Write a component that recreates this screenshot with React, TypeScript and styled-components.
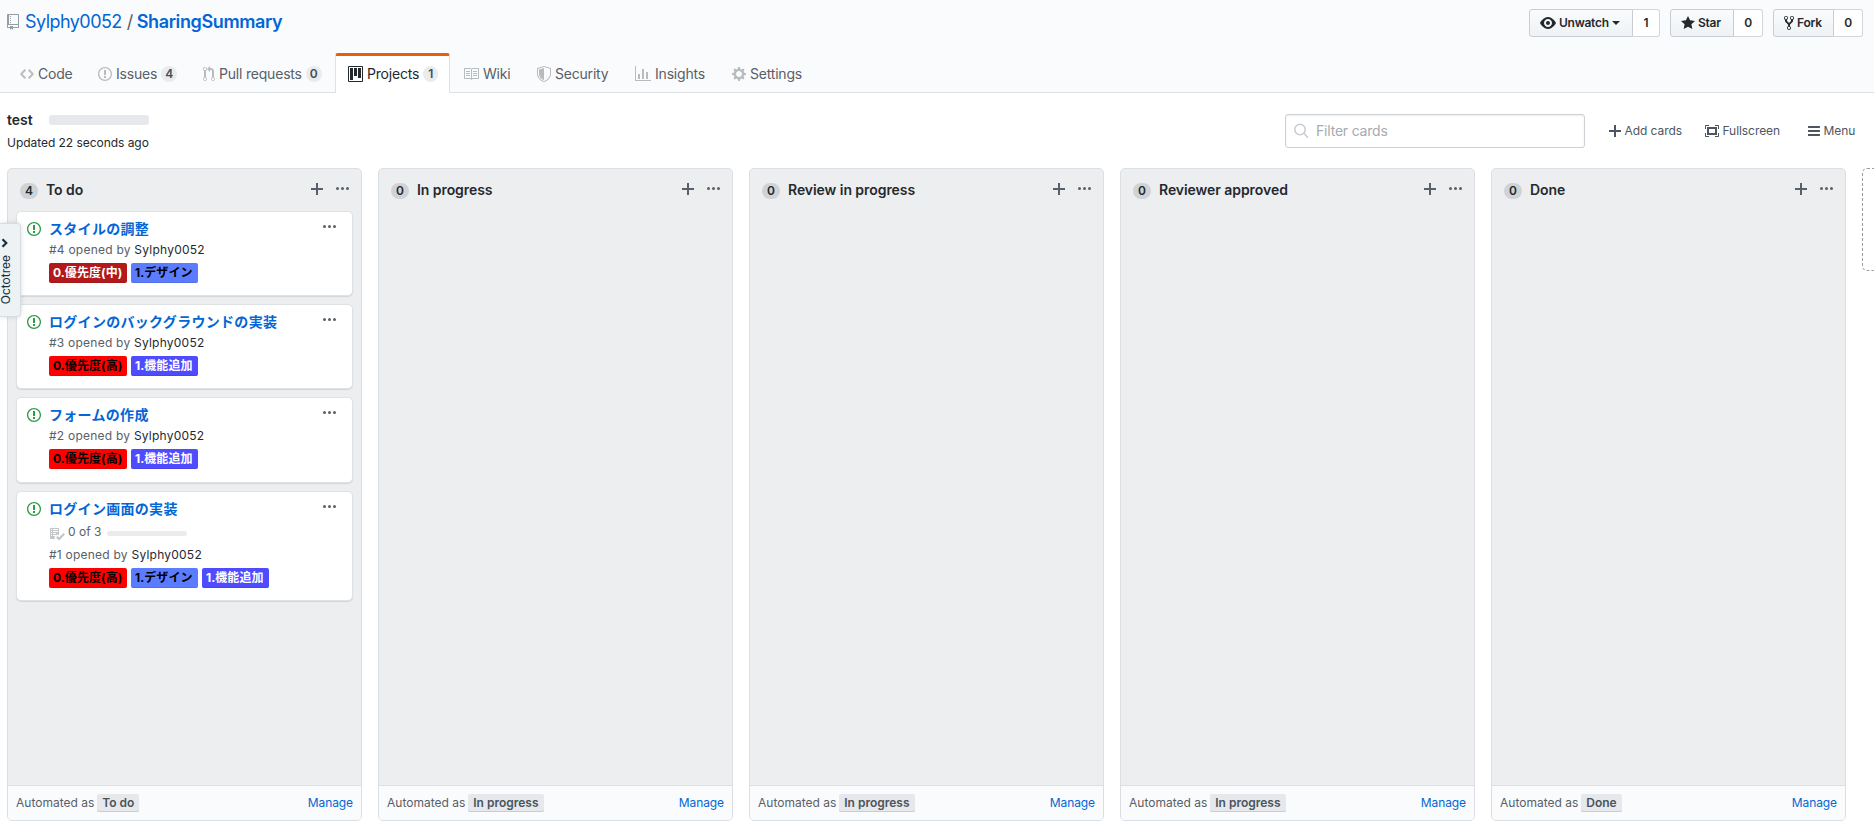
import React from "react";
import styled, { createGlobalStyle } from "styled-components";

const GlobalStyle = createGlobalStyle`
  * { box-sizing: border-box; }
  html, body { margin: 0; height: 100%; overflow: hidden; }
  body {
    background: #fff;
    color: #24292e;
    font: 14px/21px Inter, "Noto Sans CJK JP", sans-serif;
  }
  a { color: #0366d6; text-decoration: none; }
`;

const glyphs = {
  repo: [12, "M4 9H3V8h1v1zm0-3H3v1h1V6zm0-2H3v1h1V4zm0-2H3v1h1V2zm8-1v12c0 .55-.45 1-1 1H6v2l-1.5-1.5L3 16v-2H1c-.55 0-1-.45-1-1V1c0-.55.45-1 1-1h10c.55 0 1 .45 1 1zm-1 10H1v2h2v-1h3v1h5v-2zm0-10H2v9h9V1z"],
  code: [14, "M9.5 3L8 4.5 11.5 8 8 11.5 9.5 13 14 8 9.5 3zm-5 0L0 8l4.5 5L6 11.5 2.5 8 6 4.5 4.5 3z"],
  issue: [14, "M7 2.3c3.14 0 5.7 2.56 5.7 5.7s-2.56 5.7-5.7 5.7A5.71 5.71 0 0 1 1.3 8c0-3.14 2.56-5.7 5.7-5.7zM7 1C3.14 1 0 4.14 0 8s3.14 7 7 7 7-3.14 7-7-3.14-7-7-7zm1 3H6v5h2V4zm0 6H6v2h2v-2z"],
  pull: [12, "M11 11.28V5c-.03-.78-.34-1.47-.94-2.06C9.46 2.35 8.78 2.03 8 2H7V0L4 3l3 3V4h1c.27.02.48.11.69.31.21.2.3.42.31.69v6.28A1.993 1.993 0 0 0 10 15a1.993 1.993 0 0 0 1-3.72zm-1 2.92c-.66 0-1.2-.55-1.2-1.2 0-.65.55-1.2 1.2-1.2.65 0 1.2.55 1.2 1.2 0 .65-.55 1.2-1.2 1.2zM4 3c0-1.11-.89-2-2-2a1.993 1.993 0 0 0-1 3.72v6.56A1.993 1.993 0 0 0 2 15a1.993 1.993 0 0 0 1-3.72V4.72c.59-.34 1-.98 1-1.72zm-.8 10c0 .66-.55 1.2-1.2 1.2-.65 0-1.2-.55-1.2-1.2 0-.65.55-1.2 1.2-1.2.65 0 1.2.55 1.2 1.2zM2 4.2C1.34 4.2.8 3.65.8 3c0-.65.55-1.2 1.2-1.2.65 0 1.2.55 1.2 1.2 0 .65-.55 1.2-1.2 1.2z"],
  project: [15, "M10 12h3V2h-3v10zm-4-2h3V2H6v8zm-4 4h3V2H2v12zm-1 1h13V1H1v14zM14 0H1a1 1 0 0 0-1 1v14a1 1 0 0 0 1 1h13a1 1 0 0 0 1-1V1a1 1 0 0 0-1-1z"],
  book: [16, "M3 5h4v1H3V5zm0 3h4V7H3v1zm0 2h4V9H3v1zm11-5h-4v1h4V5zm0 2h-4v1h4V7zm0 2h-4v1h4V9zm2-6v9c0 .55-.45 1-1 1H9.5l-1 1-1-1H2c-.55 0-1-.45-1-1V3c0-.55.45-1 1-1h5.5l1 1 1-1H15c.55 0 1 .45 1 1zm-8 .5L7.5 3H2v9h6V3.5zm7-.5H9.5l-.5.5V12h6V3z"],
  shield: [14, "M0 2l7-2 7 2v6.02C14 12.69 8.69 16 7 16c-1.69 0-7-3.31-7-7.98V2zm1 .75L7 1l6 1.75v5.268C13 12.104 8.449 15 7 15c-1.449 0-6-2.896-6-6.982V2.75zm1 .75L7 2v12c-1.207 0-5-2.482-5-5.985V3.5z"],
  graph: [16, "M16 14v1H0V0h1v14h15zM5 13H3V8h2v5zm4 0H7V3h2v10zm4 0h-2V6h2v7z"],
  gear: [14, "M14 8.77v-1.6l-1.94-.64-.45-1.09.88-1.84-1.13-1.13-1.81.91-1.09-.45-.69-1.92h-1.6l-.63 1.94-1.11.45-1.84-.88-1.13 1.13.91 1.81-.45 1.09L0 7.23v1.59l1.94.64.45 1.09-.88 1.84 1.13 1.13 1.81-.91 1.09.45.69 1.92h1.59l.63-1.94 1.11-.45 1.84.88 1.13-1.13-.92-1.81.47-1.09L14 8.75v.02zM7 11c-1.66 0-3-1.34-3-3s1.34-3 3-3 3 1.34 3 3-1.34 3-3 3z"],
  eye: [16, "M8.06 2C3 2 0 8 0 8s3 6 8.06 6C13 14 16 8 16 8s-3-6-7.94-6zM8 12c-2.2 0-4-1.78-4-4 0-2.2 1.8-4 4-4 2.22 0 4 1.8 4 4 0 2.22-1.78 4-4 4zm2-4c0 1.11-.89 2-2 2-1.11 0-2-.89-2-2 0-1.11.89-2 2-2 1.11 0 2 .89 2 2z"],
  star: [14, "M14 6l-4.9-.64L7 1 4.9 5.36 0 6l3.6 3.26L2.67 14 7 11.67 11.33 14l-.93-4.74L14 6z"],
  fork: [10, "M8 1a1.993 1.993 0 0 0-1 3.72V6L5 8 3 6V4.72A1.993 1.993 0 0 0 2 1a1.993 1.993 0 0 0-1 3.72V6.5l3 3v1.78A1.993 1.993 0 0 0 5 15a1.993 1.993 0 0 0 1-3.72V9.5l3-3V4.72A1.993 1.993 0 0 0 8 1zM2 4.2C1.34 4.2.8 3.65.8 3c0-.65.55-1.2 1.2-1.2.65 0 1.2.55 1.2 1.2 0 .65-.55 1.2-1.2 1.2zm3 10c-.66 0-1.2-.55-1.2-1.2 0-.65.55-1.2 1.2-1.2.65 0 1.2.55 1.2 1.2 0 .65-.55 1.2-1.2 1.2zm3-10c-.66 0-1.2-.55-1.2-1.2 0-.65.55-1.2 1.2-1.2.65 0 1.2.55 1.2 1.2 0 .65-.55 1.2-1.2 1.2z"],
  plus: [12, "M12 9H7v5H5V9H0V7h5V2h2v5h5v2z"],
  kebab: [13, "M1.5 9a1.5 1.5 0 1 0 0-3 1.5 1.5 0 0 0 0 3zm5 0a1.5 1.5 0 1 0 0-3 1.5 1.5 0 0 0 0 3zM13 7.5a1.5 1.5 0 1 1-3 0 1.5 1.5 0 0 1 3 0z"],
  bars: [12, "M11.41 9H.59C0 9 0 8.59 0 8c0-.59 0-1 .59-1H11.4c.59 0 .59.41.59 1 0 .59 0 1-.59 1h.01zm0-4H.59C0 5 0 4.59 0 4c0-.59 0-1 .59-1H11.4c.59 0 .59.41.59 1 0 .59 0 1-.59 1h.01zM.59 11H11.4c.59 0 .59.41.59 1 0 .59 0 1-.59 1H.59C0 13 0 12.59 0 12c0-.59 0-1 .59-1z"],
  screen: [14, "M13 10h1v3c0 .547-.453 1-1 1h-3v-1h3v-3zM1 10H0v3c0 .547.453 1 1 1h3v-1H1v-3zm0-7h3V2H1c-.547 0-1 .453-1 1v3h1V3zm1 1h10v8H2V4zm2 6h6V6H4v4zm6-8v1h3v3h1V3c0-.547-.453-1-1-1h-3z"],
  checklist: [16, "M16 8.5l-6 6-3-3L8.5 10l1.5 1.5L14.5 7 16 8.5zM5.7 12.2l.8.8H2c-.55 0-1-.45-1-1V3c0-.55.45-1 1-1h7c.55 0 1 .45 1 1v6.5l-.8-.8c-.39-.39-1.03-.39-1.42 0L5.7 10.8a.996.996 0 0 0 0 1.41v-.01zM4 4h5V3H4v1zm0 2h5V5H4v1zm0 2h3V7H4v1zM3 9H2v1h1V9zm0-2H2v1h1V7zm0-2H2v1h1V5zm0-2H2v1h1V3zm1 7h3V9H4v1z"],
} as const;

type GlyphName = keyof typeof glyphs;

const Svg = styled.svg`
  display: block;
  flex: none;
  fill: currentColor;
`;

const Icon = ({ name }: { name: GlyphName }) => {
  const [w, d] = glyphs[name];
  return (
    <Svg width={w} height={16} viewBox={`0 0 ${w} 16`}>
      <path fillRule="evenodd" d={d} />
    </Svg>
  );
};

const Page = styled.div`
  height: 830px;
  overflow: hidden;
  display: flex;
  flex-direction: column;
`;

const RepoHeader = styled.header`
  height: 93px;
  flex: none;
  background: #fafbfc;
  border-bottom: 1px solid #dce2e8;
  display: flex;
  flex-direction: column;
  justify-content: space-between;
`;

const TitleRow = styled.div`
  display: flex;
  justify-content: space-between;
  padding: 9px 11px 0 7px;
`;

const RepoTitle = styled.h1`
  margin: 0;
  display: flex;
  align-items: center;
  height: 24px;
  font-size: 18px;
  font-weight: 400;
  letter-spacing: -0.55px;
  color: #586069;
  svg { color: #959da5; margin: 2px 6px 0 0; }
  b { font-weight: 600; letter-spacing: -0.38px; }
`;

const Slash = styled.span`
  margin: 0 4px 0 5px;
`;

const Actions = styled.div`
  display: flex;
  gap: 10px;
`;

const ActionGroup = styled.div`
  display: flex;
  height: 28px;
  font-size: 12px;
  font-weight: 600;
  letter-spacing: -0.25px;
`;

const ActionButton = styled.button<{ $w: number }>`
  width: ${(p) => p.$w}px;
  display: flex;
  align-items: center;
  gap: 3px;
  padding: 0 0 1px 10px;
  border: 1px solid #c9cdd1;
  border-radius: 3px 0 0 3px;
  background: linear-gradient(-180deg, #fafbfc, #eff3f6 90%);
  color: #24292e;
  font: inherit;
  letter-spacing: inherit;
  white-space: nowrap;
`;

const Caret = styled.i`
  border: 4px solid transparent;
  border-top-color: currentColor;
  border-bottom: 0;
`;

const ActionCount = styled.span<{ $w: number }>`
  width: ${(p) => p.$w}px;
  display: flex;
  align-items: center;
  justify-content: center;
  padding-bottom: 1px;
  border: 1px solid #d3d6d9;
  border-left: 0;
  border-radius: 0 3px 3px 0;
  background: #fff;
`;

const Tabs = styled.nav`
  display: flex;
  padding-left: 7px;
  margin-bottom: -1px;
`;

const Tab = styled.a<{ $w: number; $active?: boolean }>`
  width: ${(p) => p.$w}px;
  height: 40px;
  display: flex;
  align-items: center;
  gap: 4px;
  padding: 0 0 1px 12px;
  border: 1px solid transparent;
  border-top-width: 3px;
  border-bottom: 0;
  border-radius: 3px 3px 0 0;
  border-color: ${(p) => (p.$active ? "#e36209 #dce2e8" : "transparent")};
  background: ${(p) => (p.$active ? "#fff" : "transparent")};
  color: ${(p) => (p.$active ? "#24292e" : "#586069")};
  letter-spacing: -0.2px;
  white-space: nowrap;
  svg { color: ${(p) => (p.$active ? "#24292e" : "#b9bcbf")}; }
`;

const TabText = styled.span`
  padding-bottom: 2px;
`;

const Counter = styled.span<{ $dark?: boolean }>`
  height: 16px;
  min-width: ${(p) => (p.$dark ? 18 : 15)}px;
  padding: 0 ${(p) => (p.$dark ? 5 : 4)}px;
  border-radius: 20px;
  background: ${(p) => (p.$dark ? "#d0d3d6" : "#e9ebed")};
  color: ${(p) => (p.$dark ? "#24292e" : "#444d56")};
  font-size: 12px;
  font-weight: 600;
  line-height: 16px;
  text-align: center;
  letter-spacing: 0;
`;

const Toolbar = styled.div`
  height: 75px;
  flex: none;
  display: flex;
  justify-content: space-between;
  padding: 0 19px 0 7px;
`;

const ProjectInfo = styled.div`
  padding-top: 17px;
`;

const ProjectName = styled.div`
  display: flex;
  align-items: center;
  height: 20px;
  font-weight: 600;
  span:first-child { padding-bottom: 2px; }
`;

const ProjectProgress = styled.span`
  width: 100px;
  height: 10px;
  margin-left: auto;
  border-radius: 3px;
  background: #e7e8ec;
`;

const Updated = styled.div`
  width: 142px;
  margin-top: 4px;
  font-size: 12px;
  line-height: 18px;
  letter-spacing: -0.04px;
  white-space: nowrap;
`;

const Tools = styled.div`
  display: flex;
  align-items: center;
  height: 34px;
  margin-top: 21px;
`;

const Filter = styled.label`
  width: 300px;
  height: 34px;
  display: flex;
  align-items: center;
  gap: 7px;
  margin-right: 24px;
  padding-left: 8px;
  border: 1px solid #cdd0d5;
  border-radius: 3px;
  box-shadow: inset 0 1px 2px rgba(27, 31, 35, 0.075);
  color: #a7abaf;
  letter-spacing: -0.2px;
  svg { fill: none; stroke: #c6cbd1; stroke-width: 1.5; }
  span { padding-bottom: 2px; }
`;

const Tool = styled.button<{ $w: number }>`
  width: ${(p) => p.$w}px;
  display: flex;
  align-items: center;
  gap: 3.5px;
  padding: 0;
  border: 0;
  background: none;
  color: #4d5660;
  font: 400 12px/18px Inter, sans-serif;
  letter-spacing: -0.06px;
  white-space: nowrap;
  svg { margin-bottom: 1px; }
`;

const Board = styled.main`
  display: flex;
  gap: 16px;
  padding-left: 7px;
  height: 653px;
`;

const Column = styled.section`
  width: 355px;
  flex: none;
  display: flex;
  flex-direction: column;
  border: 1px solid #dbdfe3;
  border-radius: 5px;
  background: #edeef0;
  overflow: hidden;
`;

const ColumnHeader = styled.div`
  height: 42px;
  flex: none;
  display: flex;
  align-items: flex-start;
  padding: 13px 12px 0 12px;
  > span { margin-top: 1px; }
`;

const ColumnTitle = styled.h4`
  flex: 1;
  margin: -3px 0 0 8px;
  font-size: 14px;
  line-height: 21px;
  font-weight: 600;
  letter-spacing: -0.06px;
`;

const IconButton = styled.button<{ $gap?: number }>`
  padding: 0;
  border: 0;
  margin-left: ${(p) => p.$gap ?? 0}px;
  margin-top: -1px;
  background: none;
  color: #586069;
`;

const Cards = styled.div`
  flex: 1;
  display: flex;
  flex-direction: column;
  gap: 8px;
  padding: 0 8px;
`;

const Card = styled.article<{ $h: number }>`
  height: ${(p) => p.$h}px;
  display: flex;
  padding: 6px 16px 0 10px;
  border: 1px solid #dfe2e5;
  border-radius: 5px;
  background: #fff;
  box-shadow: 0 1px 1px rgba(27, 31, 35, 0.12);
  > svg { color: #2c9c46; margin: 3px 8px 0 0; }
`;

const CardBody = styled.div`
  flex: 1;
  font-size: 12px;
  line-height: 18px;
  color: #586069;
`;

const CardTitle = styled.a`
  display: block;
  height: 21px;
  font-size: 14px;
  line-height: 21px;
  font-weight: 600;
  letter-spacing: 0.3px;
`;

const Meta = styled.div`
  height: 18px;
  margin-top: 2px;
  letter-spacing: 0.23px;
  white-space: nowrap;
  span { color: #24292e; }
`;

const Tasks = styled.div`
  display: flex;
  align-items: center;
  height: 18px;
  margin: 4px 0 5px;
  svg { color: #c3c6c9; margin-right: 3px; margin-top: 3px; }
`;

const TaskBar = styled.span`
  width: 80px;
  height: 5px;
  margin: 2px 0 0 6px;
  border-radius: 3px;
  background: #ebebec;
`;

const Labels = styled.div`
  display: flex;
  gap: 4px;
  margin-top: 4px;
`;

const tones = {
  high: { bg: "#ff0000", fg: "#000", w: 78 },
  mid: { bg: "#b3191b", fg: "#fff", w: 78 },
  design: { bg: "#5c7cff", fg: "#000", w: 67 },
  feature: { bg: "#4f4bff", fg: "#fff", w: 66.5 },
};
type Tone = keyof typeof tones;

const Label = styled.span<{ $tone: Tone }>`
  width: ${(p) => tones[p.$tone].w}px;
  height: 20px;
  padding-left: 4px;
  border-radius: 2px;
  background: ${(p) => tones[p.$tone].bg};
  color: ${(p) => tones[p.$tone].fg};
  box-shadow: inset 0 -1px 0 rgba(27, 31, 35, 0.12);
  font-size: 12px;
  font-weight: 700;
  line-height: 20px;
  letter-spacing: 0.06px;
  white-space: nowrap;
`;

const CardMenu = styled.button`
  align-self: flex-start;
  margin-top: 1px;
  padding: 0;
  border: 0;
  background: none;
  color: #586069;
`;

const ColumnFooter = styled.footer`
  height: 35px;
  flex: none;
  display: flex;
  align-items: center;
  padding: 0 8px;
  border-top: 1px solid #dbdfe3;
  background: #fafbfc;
  font-size: 12px;
  line-height: 18px;
  color: #586069;
  a { margin-left: auto; letter-spacing: -0.1px; }
`;

const Preset = styled.span`
  height: 18px;
  margin-left: 3px;
  padding: 0 5px;
  border-radius: 2px;
  background: #e6e8eb;
  box-shadow: inset 0 -1px 0 #c9ccd1;
  font-weight: 600;
  line-height: 18px;
  color: #4b545d;
`;

const AddColumn = styled.div`
  width: 355px;
  height: 103px;
  flex: none;
  border: 1px dashed #959da5;
  border-radius: 5px;
`;

const Drawer = styled.aside`
  position: absolute;
  left: 0;
  top: 223px;
  width: 21px;
  height: 94px;
  display: flex;
  flex-direction: column;
  align-items: flex-start;
  padding-top: 14px;
  border: 1px solid #d5dde2;
  border-left: 0;
  border-radius: 0 4px 4px 0;
  background: #edf2f4;
  box-shadow: 0 0 5px rgba(27, 31, 35, 0.14);
  color: #1b2f42;
  svg { margin-left: 1px; fill: none; stroke: currentColor; stroke-width: 2.2; }
`;

const DrawerText = styled.span`
  margin-top: 7px;
  writing-mode: vertical-rl;
  transform: rotate(180deg);
  font-size: 12px;
  line-height: 11px;
  white-space: nowrap;
`;

const tabs: { icon: GlyphName; text: string; w: number; count?: number; active?: boolean }[] = [
  { icon: "code", text: "Code", w: 78 },
  { icon: "issue", text: "Issues", w: 105, count: 4 },
  { icon: "pull", text: "Pull requests", w: 145, count: 0 },
  { icon: "project", text: "Projects", w: 115, count: 1, active: true },
  { icon: "book", text: "Wiki", w: 74 },
  { icon: "shield", text: "Security", w: 98 },
  { icon: "graph", text: "Insights", w: 97 },
  { icon: "gear", text: "Settings", w: 96 },
];

const cards: { id: number; title: string; h: number; tasks?: string; labels: [Tone, string][] }[] = [
  { id: 4, title: "スタイルの調整", h: 85, labels: [["mid", "0.優先度(中)"], ["design", "1.デザイン"]] },
  { id: 3, title: "ログインのバックグラウンドの実装", h: 85, labels: [["high", "0.優先度(高)"], ["feature", "1.機能追加"]] },
  { id: 2, title: "フォームの作成", h: 86, labels: [["high", "0.優先度(高)"], ["feature", "1.機能追加"]] },
  { id: 1, title: "ログイン画面の実装", h: 110, tasks: "0 of 3", labels: [["high", "0.優先度(高)"], ["design", "1.デザイン"], ["feature", "1.機能追加"]] },
];

const columns = [
  { title: "To do", preset: "To do", cards },
  { title: "In progress", preset: "In progress", cards: [] },
  { title: "Review in progress", preset: "In progress", cards: [] },
  { title: "Reviewer approved", preset: "In progress", cards: [] },
  { title: "Done", preset: "Done", cards: [] },
];

export default function App() {
  return (
    <Page>
      <GlobalStyle />
      <RepoHeader>
        <TitleRow>
          <RepoTitle>
            <Icon name="repo" />
            <a>Sylphy0052</a>
            <Slash>/</Slash>
            <a><b>SharingSummary</b></a>
          </RepoTitle>
          <Actions>
            <ActionGroup>
              <ActionButton $w={104}><Icon name="eye" />Unwatch<Caret /></ActionButton>
              <ActionCount $w={27}>1</ActionCount>
            </ActionGroup>
            <ActionGroup>
              <ActionButton $w={64}><Icon name="star" />Star</ActionButton>
              <ActionCount $w={29}>0</ActionCount>
            </ActionGroup>
            <ActionGroup>
              <ActionButton $w={61}><Icon name="fork" />Fork</ActionButton>
              <ActionCount $w={29}>0</ActionCount>
            </ActionGroup>
          </Actions>
        </TitleRow>
        <Tabs>
          {tabs.map((t) => (
            <Tab key={t.text} $w={t.w} $active={t.active}>
              <Icon name={t.icon} />
              <TabText>{t.text}</TabText>
              {t.count !== undefined && <Counter>{t.count}</Counter>}
            </Tab>
          ))}
        </Tabs>
      </RepoHeader>
      <Toolbar>
        <ProjectInfo>
          <ProjectName><span>test</span><ProjectProgress /></ProjectName>
          <Updated>Updated 22 seconds ago</Updated>
        </ProjectInfo>
        <Tools>
          <Filter>
            <Svg width={15} height={16} viewBox="0 0 15 16">
              <circle cx="6" cy="6.5" r="5.2" />
              <path d="M9.8 10.3l4.2 4.5" />
            </Svg>
            <span>Filter cards</span>
          </Filter>
          <Tool $w={96}><Icon name="plus" />Add cards</Tool>
          <Tool $w={103}><Icon name="screen" />Fullscreen</Tool>
          <Tool $w={47}><Icon name="bars" />Menu</Tool>
        </Tools>
      </Toolbar>
      <Board>
        {columns.map((c) => (
          <Column key={c.title}>
            <ColumnHeader>
              <Counter $dark>{c.cards.length}</Counter>
              <ColumnTitle>{c.title}</ColumnTitle>
              <IconButton><Icon name="plus" /></IconButton>
              <IconButton $gap={13}><Icon name="kebab" /></IconButton>
            </ColumnHeader>
            <Cards>
              {c.cards.map((k) => (
                <Card key={k.id} $h={k.h}>
                  <Icon name="issue" />
                  <CardBody>
                    <CardTitle>{k.title}</CardTitle>
                    {k.tasks && <Tasks><Icon name="checklist" />{k.tasks}<TaskBar /></Tasks>}
                    <Meta>#{k.id} opened by <span>Sylphy0052</span></Meta>
                    <Labels>
                      {k.labels.map(([tone, text]) => <Label key={text} $tone={tone}>{text}</Label>)}
                    </Labels>
                  </CardBody>
                  <CardMenu><Icon name="kebab" /></CardMenu>
                </Card>
              ))}
            </Cards>
            <ColumnFooter>
              Automated as <Preset>{c.preset}</Preset>
              <a>Manage</a>
            </ColumnFooter>
          </Column>
        ))}
        <AddColumn />
      </Board>
      <Drawer>
        <Svg width={8} height={10} viewBox="0 0 8 10"><path d="M1.5 1.2L5.3 5 1.5 8.8" /></Svg>
        <DrawerText>Octotree</DrawerText>
      </Drawer>
    </Page>
  );
}
